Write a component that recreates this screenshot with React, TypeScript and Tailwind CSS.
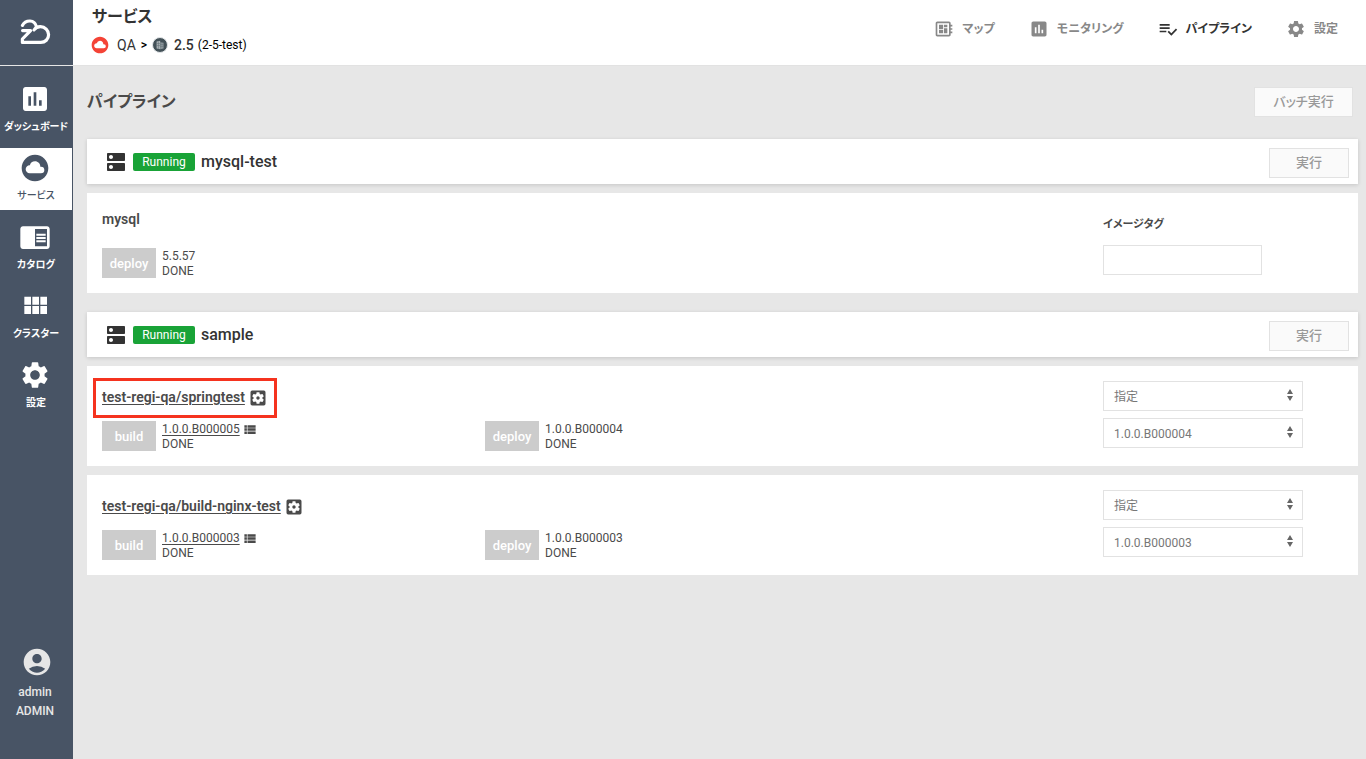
import type { ReactNode } from 'react';
import {
  MdAccountCircle,
  MdChromeReaderMode,
  MdCloudCircle,
  MdDeveloperBoard,
  MdDns,
  MdPoll,
  MdSettings,
  MdSettingsApplications,
  MdViewList,
} from 'react-icons/md';

interface NavItem {
  label: string;
  icon: (props: { size?: number; className?: string }) => ReactNode;
  active?: boolean;
}

interface Stage {
  name: string;
  version: string;
  status: string;
  history?: boolean;
}

interface Pipeline {
  repository: string;
  stages: Stage[];
  tag: string;
  highlighted?: boolean;
}

function PlaylistCheckIcon({ size = 24 }: { size?: number }) {
  return (
    <svg viewBox="0 0 24 24" width={size} height={size} fill="currentColor" aria-hidden="true">
      <path d="M14 10H2v2h12v-2zm0-4H2v2h12V6zM2 16h8v-2H2v2zm19.5-4.5L23 13l-6.99 7-4.51-4.5L13 14l3.01 3 5.49-5.5z" />
    </svg>
  );
}

function ModulesIcon({ size = 24, className }: { size?: number; className?: string }) {
  return (
    <svg viewBox="0 0 24 24" width={size} height={size} className={className} fill="currentColor" aria-hidden="true">
      <path d="M4 11h5V5H4v6zm0 7h5v-6H4v6zm6 0h5v-6h-5v6zm6 0h5v-6h-5v6zm-6-7h5V5h-5v6zm6-6v6h5V5h-5z" />
    </svg>
  );
}

const sideNav: NavItem[] = [
  { label: 'ダッシュボード', icon: MdPoll },
  { label: 'サービス', icon: MdCloudCircle, active: true },
  { label: 'カタログ', icon: MdChromeReaderMode },
  { label: 'クラスター', icon: ModulesIcon },
  { label: '設定', icon: MdSettings },
];

const topNav: NavItem[] = [
  { label: 'マップ', icon: MdDeveloperBoard },
  { label: 'モニタリング', icon: MdPoll },
  { label: 'パイプライン', icon: PlaylistCheckIcon, active: true },
  { label: '設定', icon: MdSettings },
];

const pipelines: Pipeline[] = [
  {
    repository: 'test-regi-qa/springtest',
    stages: [
      { name: 'build', version: '1.0.0.B000005', status: 'DONE', history: true },
      { name: 'deploy', version: '1.0.0.B000004', status: 'DONE' },
    ],
    tag: '1.0.0.B000004',
    highlighted: true,
  },
  {
    repository: 'test-regi-qa/build-nginx-test',
    stages: [
      { name: 'build', version: '1.0.0.B000003', status: 'DONE', history: true },
      { name: 'deploy', version: '1.0.0.B000003', status: 'DONE' },
    ],
    tag: '1.0.0.B000003',
  },
];

function Logo() {
  return (
    <svg viewBox="0 0 32 28" className="h-7 w-8" fill="none" stroke="#fff" strokeWidth="3.2" strokeLinecap="round" strokeLinejoin="round" aria-hidden="true">
      <path d="M3.4 6.4C5 3.4 8 1.9 11 2c3.2.2 5.6 2.2 6.4 5.6" />
      <path d="M3.6 11.6h8L3.4 20v3.4h18.4c4.4 0 7.8-3.2 7.8-7.6s-3.6-8.2-8.2-8.2c-2.6 0-5 1.2-6.4 3.4" />
    </svg>
  );
}

function Sidebar() {
  return (
    <aside className="flex w-[73px] shrink-0 flex-col bg-[#485465]">
      <a href="#home" aria-label="ホーム" className="flex h-[66px] items-center justify-center border-b border-[#e6e6e6] pr-1">
        <Logo />
      </a>
      <nav className="mt-[13px] flex flex-col gap-[7px] pr-px">
        {sideNav.map(({ label, icon: Icon, active }) => (
          <a
            key={label}
            href={`#${label}`}
            className={`flex h-[62px] flex-col items-center pt-1 text-[10px] leading-6 ${
              active ? 'bg-white font-medium text-[#485465]' : 'font-bold text-white'
            }`}
          >
            <Icon size={32} className="mr-[2px]" />
            <span className="whitespace-nowrap">{label}</span>
          </a>
        ))}
      </nav>
      <a href="#account" className="mt-auto flex flex-col items-center pb-[38px] text-xs font-medium text-[#e6e6e6]">
        <MdAccountCircle size={32} className="mb-[5px]" />
        <span className="pr-[3px] leading-[19px]">admin</span>
        <span className="pr-[3px] leading-[19px]">ADMIN</span>
      </a>
    </aside>
  );
}

function NamespaceIcon() {
  return (
    <svg viewBox="0 0 16 16" className="size-4" aria-hidden="true">
      <circle cx="8" cy="8" r="7.5" fill="#435158" stroke="#e2e5e7" />
      <path d="M4.6 4.6l3.6-.9v8.6l-3.6-.9z" fill="#a9b1b5" />
      <path d="M8.2 5.2l3.4.6v5.6l-3.4.9z" fill="#8b969b" />
      <path d="M4.6 6.6h3.6M4.6 8.6h3.6M8.2 7.4h3.4M8.2 9.4h3.4M6.4 4.4v7.4" stroke="#5d6a70" strokeWidth=".5" />
    </svg>
  );
}

function Header() {
  return (
    <header className="flex h-[66px] items-start justify-between border-b border-[#e2e2e2] bg-white pr-[28px] pl-[19px]">
      <div>
        <h1 className="mt-[5px] text-base leading-6 font-bold text-[#333]">サービス</h1>
        <div className="mt-[6px] -ml-[2px] flex h-5 items-center text-sm text-[#333]">
          <MdCloudCircle size={20} className="mr-[7px] text-[#f44336]" />
          <a href="#qa">QA</a>
          <span className="mx-[5px] text-xs font-medium text-black">&gt;</span>
          <NamespaceIcon />
          <a href="#namespace" className="ml-[6px] font-medium">2.5</a>
          <span className="ml-1 text-xs text-black">(2-5-test)</span>
        </div>
      </div>
      <nav className="mt-[19px] flex gap-[34px]">
        {topNav.map(({ label, icon: Icon, active }) => (
          <a
            key={label}
            href={`#${label}`}
            className={`flex h-5 items-center gap-2 text-xs font-bold ${active ? 'text-[#333]' : 'text-[#888]'}`}
          >
            <Icon size={20} />
            {label}
          </a>
        ))}
      </nav>
    </header>
  );
}

function RunButton({ children, className }: { children: ReactNode; className: string }) {
  return (
    <button
      type="button"
      className={`h-[30px] border border-[#e2e2e2] bg-[#fafafa] text-[13px] font-medium text-[#999] ${className}`}
    >
      {children}
    </button>
  );
}

function ServiceBar({ name }: { name: string }) {
  return (
    <div className="flex h-[45px] items-center bg-white pr-[9px] pl-[17px] shadow-[0_1px_4px_rgba(0,0,0,0.15)]">
      <MdDns size={24} className="text-[#333]" />
      <span className="ml-[5px] h-[18px] w-[62px] rounded-xs bg-[#19a337] text-center text-xs leading-[18px] text-white">Running</span>
      <h3 className="ml-[6px] text-base font-medium text-[#333]">{name}</h3>
      <RunButton className="mt-[2px] ml-auto w-20">実行</RunButton>
    </div>
  );
}

function StageStatus({ stage }: { stage: Stage }) {
  return (
    <div className="flex w-[383px] gap-[6px]">
      <button type="button" className="h-[30px] w-[54px] bg-[#ccc] pt-[2px] text-[13px] font-medium text-white">
        {stage.name}
      </button>
      <div className="pt-px text-xs leading-[15px]">
        {stage.history ? (
          <div className="flex items-center">
            <a href="#build" className="underline underline-offset-2">{stage.version}</a>
            <MdViewList size={16} className="ml-[2px] h-[15px]" />
          </div>
        ) : (
          <div>{stage.version}</div>
        )}
        <div>{stage.status}</div>
      </div>
    </div>
  );
}

function SelectBox({ label, value }: { label: string; value: string }) {
  return (
    <div className="relative w-[200px]">
      <select
        aria-label={label}
        defaultValue={value}
        className="block h-[30px] w-full appearance-none border border-[#e2e2e2] bg-white px-[10px] pt-[2px] text-xs text-[#777]"
      >
        <option>{value}</option>
      </select>
      <svg viewBox="0 0 6 12" className="pointer-events-none absolute top-2 right-[10px] h-3 w-[6px]" fill="#666" aria-hidden="true">
        <path d="M0 5l3-5 3 5zM0 7h6l-3 5z" />
      </svg>
    </div>
  );
}

function PipelineCard({ pipeline }: { pipeline: Pipeline }) {
  return (
    <section className="flex h-[100px] justify-between bg-white px-[15px] text-[#4a4a4a]">
      <div>
        <div className="relative mt-[21px] mb-[14px] flex h-5 w-fit items-center text-sm font-semibold">
          <a href="#repository" className="underline underline-offset-2">{pipeline.repository}</a>
          <button type="button" aria-label="パイプライン設定" className="mt-[2px] ml-[3px]">
            <MdSettingsApplications size={20} />
          </button>
          {pipeline.highlighted && (
            <span className="pointer-events-none absolute -inset-x-[9px] -top-[9px] -bottom-[11px] border-3 border-[#f5331f]" />
          )}
        </div>
        <div className="flex">
          {pipeline.stages.map((stage) => (
            <StageStatus key={stage.name} stage={stage} />
          ))}
        </div>
      </div>
      <div className="flex w-60 flex-col gap-[7px] pt-[15px]">
        <SelectBox label="タグの指定方法" value="指定" />
        <SelectBox label="イメージタグ" value={pipeline.tag} />
      </div>
    </section>
  );
}

export default function App() {
  return (
    <div className="flex min-h-screen bg-[#e7e7e7] font-[Roboto,'Noto_Sans_CJK_JP',sans-serif] [font-feature-settings:'palt']">
      <Sidebar />
      <div className="min-w-0 flex-1">
        <Header />
        <main className="pt-[21px] pr-2 pb-8 pl-[14px]">
          <div className="mb-[22px] flex items-start justify-between pr-[5px]">
            <h2 className="text-base leading-[29px] font-bold text-[#4a4a4a]">パイプライン</h2>
            <RunButton className="w-[99px]">バッチ実行</RunButton>
          </div>

          <div className="mb-[19px] flex flex-col gap-[9px]">
            <ServiceBar name="mysql-test" />
            <section className="flex h-[100px] justify-between bg-white px-[15px] text-[#4a4a4a]">
              <div>
                <h4 className="mt-4 mb-[19px] text-sm leading-5 font-semibold">mysql</h4>
                <StageStatus stage={{ name: 'deploy', version: '5.5.57', status: 'DONE' }} />
              </div>
              <div className="w-60 pt-[22px]">
                <label htmlFor="image-tag" className="mb-[10px] block text-[11px] leading-5 font-bold">イメージタグ</label>
                <input id="image-tag" type="text" className="block h-[30px] w-[159px] border border-[#e2e2e2] bg-white px-[10px] text-xs" />
              </div>
            </section>
          </div>

          <div className="flex flex-col gap-[9px]">
            <ServiceBar name="sample" />
            {pipelines.map((pipeline) => (
              <PipelineCard key={pipeline.repository} pipeline={pipeline} />
            ))}
          </div>
        </main>
      </div>
    </div>
  );
}
